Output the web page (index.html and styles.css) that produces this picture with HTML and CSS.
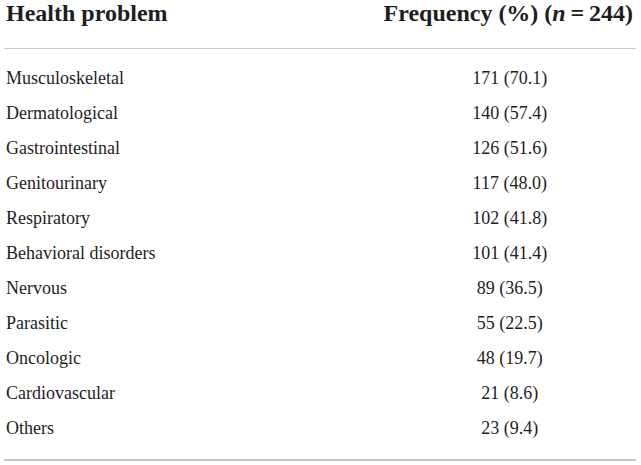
FILE: index.html
```html
<!DOCTYPE html>
<html>
<head>
<meta charset="utf-8">
<link rel="stylesheet" href="styles.css">
</head>
<body>
<table class="tbl">
<thead>
<tr><th class="col-name">Health problem</th><th class="col-freq">Frequency (%) (<i>n</i>&#8201;=&#8201;244)</th></tr>
</thead>
<tbody>
<tr class="first"><td class="name">Musculoskeletal</td><td class="val">171 (70.1)</td></tr>
<tr><td class="name">Dermatological</td><td class="val">140 (57.4)</td></tr>
<tr><td class="name">Gastrointestinal</td><td class="val">126 (51.6)</td></tr>
<tr><td class="name">Genitourinary</td><td class="val">117 (48.0)</td></tr>
<tr><td class="name">Respiratory</td><td class="val">102 (41.8)</td></tr>
<tr><td class="name">Behavioral disorders</td><td class="val">101 (41.4)</td></tr>
<tr><td class="name">Nervous</td><td class="val">89 (36.5)</td></tr>
<tr><td class="name">Parasitic</td><td class="val">55 (22.5)</td></tr>
<tr><td class="name">Oncologic</td><td class="val">48 (19.7)</td></tr>
<tr><td class="name">Cardiovascular</td><td class="val">21 (8.6)</td></tr>
<tr class="last"><td class="name">Others</td><td class="val">23 (9.4)</td></tr>
</tbody>
</table>
</body>
</html>
```
FILE: styles.css
```css
html, body {
  margin: 0;
  padding: 0;
  background: #ffffff;
}
body {
  font-family: "Liberation Serif", "Times New Roman", serif;
  color: #1e1e1e;
}
.tbl {
  margin-left: 4px;
  width: 632px;
  border-collapse: collapse;
  border-bottom: 2px solid #c8c8c8;
}
.tbl th {
  font-size: 24px;
  font-weight: bold;
  line-height: 26px;
  padding: 0 0 22px 0;
  border-bottom: 1px solid #cccccc;
  white-space: nowrap;
}
.tbl th.col-name {
  text-align: left;
  padding-left: 2px;
}
.tbl th.col-freq {
  text-align: right;
  padding-right: 3px;
  width: 1px;
}
.tbl td {
  font-size: 18px;
  line-height: 22px;
  padding: 6.5px 0;
}
.tbl td.name {
  text-align: left;
  padding-left: 2px;
}
.tbl td.val {
  text-align: center;
}
.tbl tr.first td {
  padding-top: 18px;
}
.tbl tr.last td {
  padding-bottom: 20px;
}
```
